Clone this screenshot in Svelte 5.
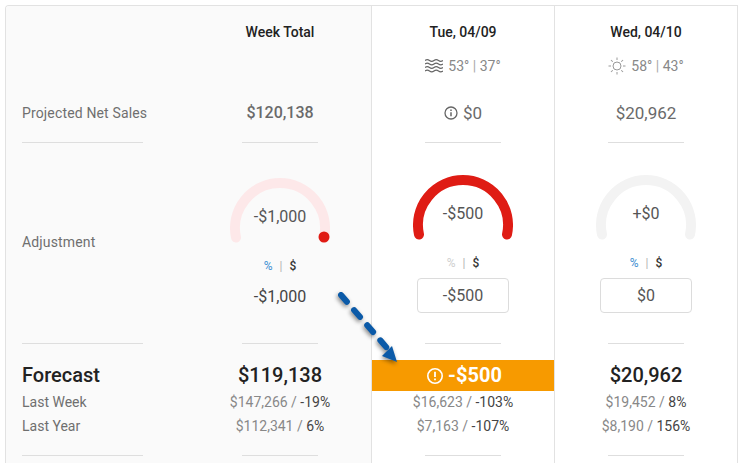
<script>
  const days = [
    {
      date: 'Tue, 04/09', icon: 'waves', high: 53, low: 37, net: '$0', netInfo: true,
      adj: '-$500', arc: 'full', pctOff: true, boxed: true, boxValue: '-$500',
      forecast: '-$500', alert: true,
      week: ['$16,623', '-103%'], year: ['$7,163', '-107%']
    },
    {
      date: 'Wed, 04/10', icon: 'sun', high: 58, low: 43, net: '$20,962', netInfo: false,
      adj: '+$0', arc: 'none', pctOff: false, boxed: true, boxValue: '$0',
      forecast: '$20,962', alert: false,
      week: ['$19,452', '8%'], year: ['$8,190', '156%']
    }
  ];
  const rayAngles = [0, 45, 90, 135, 180, 225, 270, 315];
</script>

{#snippet gauge(text, kind)}
  <div class="gauge">
    <svg width="100" height="66" viewBox="0 0 100 66" aria-hidden="true">
      <path
        class="arc {kind}"
        d="M6 59.5 A45 45 0 1 1 94 59.5"
        fill="none"
        stroke-width="10"
        stroke-linecap="round"
      />
      {#if kind === 'week'}
        <circle cx="94" cy="59" r="5.5" fill="#e01b14" />
      {/if}
    </svg>
    <span class="gauge-text">{text}</span>
  </div>
{/snippet}

{#snippet toggle(off)}
  <div class="toggle">
    <span class="pct" class:off>%</span>
    <span class="bar">|</span>
    <span class="usd">$</span>
  </div>
{/snippet}

<div class="card">
  <div class="col labels">
    <div class="title"></div>
    <div class="weather"></div>
    <div class="net">Projected Net Sales</div>
    <div class="rule"></div>
    <div class="adjust adjust-label">Adjustment</div>
    <div class="rule"></div>
    <div class="forecast forecast-label">Forecast</div>
    <div class="cmp">Last Week</div>
    <div class="cmp">Last Year</div>
    <div class="rule end"></div>
  </div>

  <div class="col total">
    <div class="title">Week Total</div>
    <div class="weather"></div>
    <div class="net">$120,138</div>
    <div class="rule"></div>
    <div class="adjust week-adjust">
      {@render gauge('-$1,000', 'week')}
      {@render toggle(false)}
      <div class="plain-value">-$1,000</div>
    </div>
    <div class="rule"></div>
    <div class="forecast">$119,138</div>
    <div class="cmp">$147,266 / <b>-19%</b></div>
    <div class="cmp">$112,341 / <b>6%</b></div>
    <div class="rule end"></div>
  </div>

  {#each days as day}
    <div class="col day">
      <div class="title">{day.date}</div>
      <div class="weather">
        {#if day.icon === 'waves'}
          <svg width="18" height="14" viewBox="0 0 18 14" fill="none" stroke="#666" stroke-width="1.2" aria-hidden="true">
            <path d="M0 1.5 Q2.25 -0.2 4.5 1.5 T9 1.5 T13.5 1.5 T18 1.5" />
            <path d="M0 5 Q2.25 3.3 4.5 5 T9 5 T13.5 5 T18 5" />
            <path d="M0 8.5 Q2.25 6.8 4.5 8.5 T9 8.5 T13.5 8.5 T18 8.5" />
            <path d="M0 12 Q2.25 10.3 4.5 12 T9 12 T13.5 12 T18 12" />
          </svg>
        {:else}
          <svg width="18" height="18" viewBox="0 0 18 18" fill="none" stroke="#999" stroke-width="1" aria-hidden="true">
            <circle cx="9" cy="9" r="4" />
            {#each rayAngles as a}
              <path d="M9 0.5 V3" transform="rotate({a} 9 9)" />
            {/each}
          </svg>
        {/if}
        <span>{day.high}° <i>|</i> {day.low}°</span>
      </div>
      <div class="net">
        {#if day.netInfo}
          <svg class="info" width="14" height="14" viewBox="0 0 14 14" fill="none" stroke="#666" aria-hidden="true">
            <circle cx="7" cy="7" r="6" stroke-width="1.3" />
            <path d="M7 6.2 V10.2" stroke-width="1.5" />
            <path d="M7 3.6 V5" stroke-width="1.5" />
          </svg>
        {/if}
        {day.net}
      </div>
      <div class="rule"></div>
      <div class="adjust">
        {@render gauge(day.adj, day.arc)}
        {@render toggle(day.pctOff)}
        <div class="box">{day.boxValue}</div>
      </div>
      <div class="rule"></div>
      <div class="forecast" class:alert={day.alert}>
        {#if day.alert}
          <svg class="alert-icon" width="18" height="18" viewBox="0 0 18 18" fill="none" stroke="#fff" aria-hidden="true">
            <circle cx="9" cy="9" r="7.2" stroke-width="1.6" />
            <path d="M9 4.8 V10" stroke-width="1.8" />
            <path d="M9 11.4 V13.2" stroke-width="1.8" />
          </svg>
        {/if}
        {day.forecast}
      </div>
      <div class="cmp">{day.week[0]} / <b>{day.week[1]}</b></div>
      <div class="cmp">{day.year[0]} / <b>{day.year[1]}</b></div>
      <div class="rule end"></div>
    </div>
  {/each}

  <svg class="arrow" width="80" height="90" viewBox="0 0 80 90" aria-hidden="true">
    <path d="M7 7 L53 60" fill="none" stroke="#0b5aa8" stroke-width="6" stroke-dasharray="9 11" stroke-linecap="round" />
    <path d="M63 74 L48 68 L58 58 Z" fill="#0b5aa8" />
  </svg>
</div>

<style>
  :global(body) {
    background: #fff;
  }

  .card {
    position: relative;
    display: flex;
    box-sizing: border-box;
    width: 733px;
    height: 458px;
    margin: 5px 0 0 5px;
    overflow: hidden;
    border: 1px solid #e2e2e2;
    border-bottom: 0;
    border-top-left-radius: 4px;
    font-family: Roboto, "Open Sans", sans-serif;
    color: #333;
  }

  .col {
    display: flex;
    flex-direction: column;
    align-items: center;
    flex: none;
    width: 182px;
    text-align: center;
  }

  .labels {
    width: 183px;
    padding-left: 16px;
    box-sizing: border-box;
    align-items: flex-start;
    background: #fafafa;
    color: #6f6f6f;
    text-align: left;
  }

  .total {
    background: #fafafa;
  }

  .day {
    border-left: 1px solid #e2e2e2;
  }

  .title {
    height: 16px;
    margin-top: 18px;
    font-size: 14px;
    font-weight: 500;
    line-height: 16px;
    color: #222;
  }

  .weather {
    display: flex;
    align-items: center;
    justify-content: center;
    gap: 5px;
    height: 20px;
    margin-top: 16px;
    font-size: 14px;
    color: #888;
  }

  .weather i {
    font-style: normal;
    color: #aaa;
  }

  .net {
    display: flex;
    align-items: center;
    gap: 5px;
    height: 20px;
    padding: 27px 0 19px;
    font-size: 17px;
    line-height: 20px;
    color: #6a6a6a;
  }

  .total .net {
    font-size: 16px;
    font-weight: 500;
  }

  .labels .net {
    font-size: 14px;
    letter-spacing: 0.15px;
    color: #6f6f6f;
  }

  .rule {
    flex: none;
    width: 76px;
    height: 1px;
    background: #dedede;
  }

  .labels .rule {
    width: 121px;
  }

  .adjust {
    display: flex;
    flex-direction: column;
    align-items: center;
    box-sizing: border-box;
    height: 200px;
    padding-top: 32px;
  }

  .week-adjust {
    padding-top: 35px;
  }

  .adjust-label {
    align-items: flex-start;
    padding-top: 90px;
    font-size: 14px;
    letter-spacing: 0.15px;
    line-height: 18px;
  }

  .gauge {
    position: relative;
    width: 100px;
    height: 66px;
  }

  .gauge svg {
    display: block;
  }

  .arc.full {
    stroke: #df1c14;
  }

  .arc.none {
    stroke: #f3f3f3;
  }

  .arc.week {
    stroke: #fde8e9;
  }

  .gauge-text {
    position: absolute;
    top: 29px;
    left: 0;
    width: 100%;
    font-size: 16px;
    line-height: 20px;
    color: #555;
  }

  .toggle {
    display: flex;
    align-items: center;
    justify-content: center;
    gap: 7px;
    height: 14px;
    margin-top: 15px;
    font-size: 12px;
    line-height: 14px;
    color: #333;
  }

  .pct {
    color: #3f8fd2;
  }

  .pct.off {
    color: #cfcfcf;
  }

  .bar {
    color: #b4b4b4;
  }

  .usd {
    font-weight: 500;
  }

  .box {
    box-sizing: border-box;
    width: 92px;
    height: 35px;
    margin-top: 8px;
    border: 1px solid #dcdcdc;
    border-radius: 4px;
    background: #fff;
    font-size: 16px;
    line-height: 33px;
    color: #555;
  }

  .plain-value {
    margin-top: 14px;
    font-size: 16px;
    line-height: 20px;
    color: #444;
  }

  .forecast {
    display: flex;
    align-items: center;
    justify-content: center;
    gap: 4px;
    align-self: stretch;
    box-sizing: border-box;
    height: 31px;
    margin-top: 16px;
    padding-bottom: 2px;
    font-size: 20px;
    font-weight: 500;
    color: #222;
  }

  .forecast-label {
    justify-content: flex-start;
  }

  .forecast.alert {
    padding-left: 2px;
    background: #f79a00;
    color: #fff;
    font-weight: 700;
  }

  .alert-icon {
    margin-top: 2px;
  }

  .cmp {
    height: 24px;
    font-size: 14px;
    line-height: 23px;
    color: #888;
  }

  .labels .cmp {
    color: #6f6f6f;
  }

  .cmp b {
    font-weight: 400;
    color: #444;
  }

  .rule.end {
    margin-top: 16px;
  }

  .arrow {
    position: absolute;
    top: 282px;
    left: 328px;
    overflow: visible;
    filter: drop-shadow(-1px 2px 2px rgba(0, 0, 0, 0.45));
  }
</style>
